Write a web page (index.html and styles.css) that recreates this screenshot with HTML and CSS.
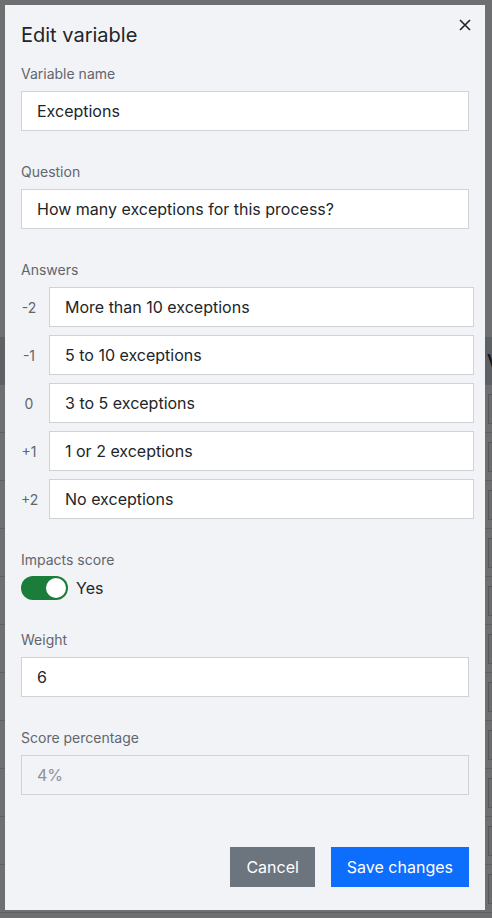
FILE: index.html
```html
<!DOCTYPE html>
<html lang="en">
<head>
<meta charset="utf-8">
<title>Edit variable</title>
<link rel="stylesheet" href="styles.css">
</head>
<body>
<div class="page">
  <div class="page-top"></div>
  <div class="page-band"><span class="band-text">Variables</span></div>
  <div class="page-row"><span class="row-box"></span></div>
  <div class="page-row"><span class="row-box"></span></div>
  <div class="page-row"><span class="row-box"></span></div>
  <div class="page-row"><span class="row-box"></span></div>
  <div class="page-row"><span class="row-box"></span></div>
  <div class="page-row"><span class="row-box"></span></div>
  <div class="page-row"><span class="row-box"></span></div>
  <div class="page-row"><span class="row-box"></span></div>
  <div class="page-row"><span class="row-box"></span></div>
  <div class="page-row"><span class="row-box"></span></div>
  <div class="page-row"><span class="row-box"></span></div>
</div>

<div class="modal">
  <button class="close" aria-label="Close">
    <svg width="20" height="20" viewBox="0 0 20 20"><path d="M5 5L15 15M15 5L5 15" stroke="#222" stroke-width="1.6" fill="none"/></svg>
  </button>
  <h1 class="title">Edit variable</h1>

  <div class="field">
    <label class="label">Variable name</label>
    <input class="input" value="Exceptions">
  </div>

  <div class="field">
    <label class="label">Question</label>
    <input class="input" value="How many exceptions for this process?">
  </div>

  <div class="field">
    <label class="label">Answers</label>
    <div class="answers">
      <div class="answer"><span class="score">-2</span><input class="input" value="More than 10 exceptions"></div>
      <div class="answer"><span class="score">-1</span><input class="input" value="5 to 10 exceptions"></div>
      <div class="answer"><span class="score">0</span><input class="input" value="3 to 5 exceptions"></div>
      <div class="answer"><span class="score">+1</span><input class="input" value="1 or 2 exceptions"></div>
      <div class="answer"><span class="score">+2</span><input class="input" value="No exceptions"></div>
    </div>
  </div>

  <div class="field field-switch">
    <label class="label">Impacts score</label>
    <div class="switch-row">
      <span class="switch"><span class="knob"></span></span>
      <span class="switch-text">Yes</span>
    </div>
  </div>

  <div class="field">
    <label class="label">Weight</label>
    <input class="input" value="6">
  </div>

  <div class="field field-last">
    <label class="label">Score percentage</label>
    <input class="input input-disabled" value="4%" disabled>
  </div>

  <div class="footer">
    <button class="btn btn-cancel">Cancel</button>
    <button class="btn btn-save">Save changes</button>
  </div>
</div>
</body>
</html>
```

FILE: styles.css
```css
* { box-sizing: border-box; }
html, body { margin: 0; height: 100%; }
body {
  background: #6e6f71;
  font-family: Inter, "Noto Sans", sans-serif;
  overflow: hidden;
  position: relative;
}

.page-top { height: 337px; }
.page-band {
  height: 48px;
  background: #5d6166;
  padding-left: 487px;
  font-size: 17px;
  font-weight: 600;
  line-height: 48px;
  color: #161616;
  white-space: nowrap;
  overflow: hidden;
}
.page-row {
  height: 48px;
  border-bottom: 1px solid #5e5f61;
  padding: 9px 0 0 488px;
  overflow: hidden;
}
.row-box {
  display: block;
  width: 40px;
  height: 30px;
  border: 1px solid #57585a;
  background: #6b6c6e;
}

.modal {
  position: absolute;
  top: 5px;
  left: 5px;
  width: 480px;
  background: #f1f3f7;
  padding: 16px 16px 23px;
}
.close {
  position: absolute;
  top: 10px;
  right: 10px;
  width: 20px;
  height: 20px;
  padding: 0;
  border: 0;
  background: none;
  cursor: pointer;
}
.close svg { display: block; }

.title {
  margin: 0 0 15px;
  font-size: 20px;
  font-weight: 400;
  line-height: 28px;
  color: #212529;
}

.field { margin-bottom: 31px; }
.field-switch { margin-bottom: 30px; }
.field-last { margin-bottom: 0; }

.label {
  display: block;
  font-size: 14px;
  line-height: 20px;
  color: #62666c;
  margin-bottom: 7px;
}

.input {
  display: block;
  width: 100%;
  height: 40px;
  margin: 0;
  border: 1px solid #cfd2d7;
  border-radius: 0;
  background: #fff;
  padding: 0 15px;
  font-family: Inter, "Noto Sans", sans-serif;
  font-size: 16px;
  color: #212529;
  outline: none;
}
.input-disabled {
  background: #f1f3f7;
  color: #8d9198;
}

.answers {
  display: flex;
  flex-direction: column;
  gap: 8px;
  margin-right: -5px;
}
.answer {
  display: flex;
  align-items: center;
}
.score {
  flex: 0 0 16px;
  width: 16px;
  min-width: 0;
  margin-right: 12px;
  text-align: center;
  white-space: nowrap;
  font-size: 14px;
  color: #62666c;
}
.answer .input {
  flex: 1 1 auto;
  width: auto;
  min-width: 0;
}

.switch-row {
  display: flex;
  align-items: center;
  gap: 8px;
  margin-top: -1px;
  height: 24px;
}
.switch {
  display: flex;
  justify-content: flex-end;
  align-items: center;
  width: 47px;
  height: 24px;
  border-radius: 12px;
  background: #1b7d3a;
  padding: 2px;
}
.knob {
  width: 20px;
  height: 20px;
  border-radius: 50%;
  background: #fff;
}
.switch-text {
  font-size: 16px;
  color: #212529;
}

.footer {
  display: flex;
  justify-content: flex-end;
  gap: 16px;
  margin-top: 52px;
}
.btn {
  height: 40px;
  padding: 0 16px;
  border: 0;
  border-radius: 0;
  font-family: Inter, "Noto Sans", sans-serif;
  font-size: 16px;
  color: #fff;
  cursor: pointer;
}
.btn-cancel { background: #6c757d; }
.btn-save { background: #0d6efd; }
```
